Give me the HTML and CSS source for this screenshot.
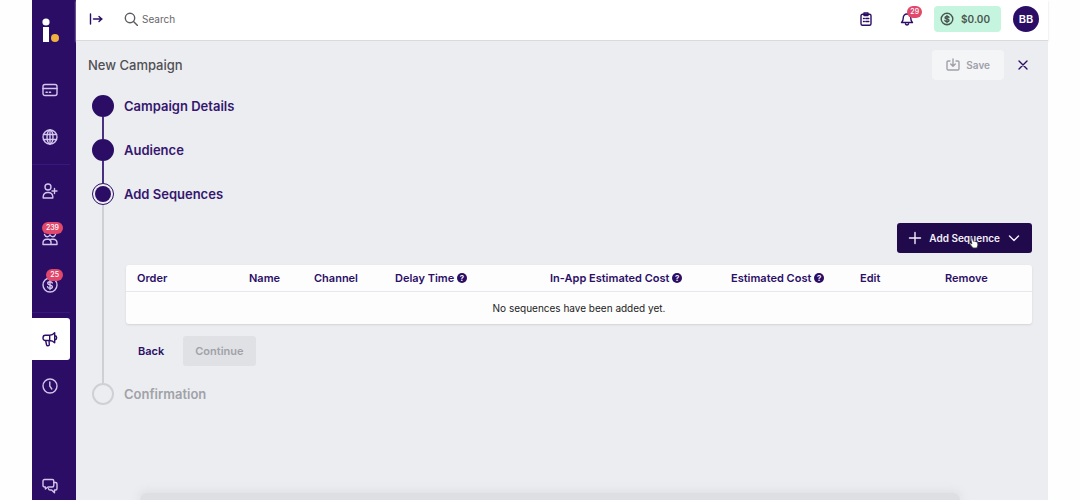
FILE: index.html
```html
<!DOCTYPE html>
<html lang="en">
<head>
    <meta charset="UTF-8">
    <meta name="viewport" content="width=device-width, initial-scale=1.0">
    <title>New Campaign</title>
    <link rel="stylesheet" href="styles.css">
</head>
<body>
    <div class="app">
        <nav class="sidebar" aria-label="Main">
            <a href="#" class="logo" aria-label="Home">
                <svg width="18" height="26" viewBox="0 0 18 26">
                    <circle cx="5" cy="4" r="3.6" fill="#fff"/>
                    <rect x="2" y="9" width="6" height="15" fill="#fff"/>
                    <circle cx="14" cy="20" r="4" fill="#f0b23e"/>
                </svg>
            </a>
            <a href="#" class="nav-item" aria-label="Billing">
                <svg class="icon" viewBox="0 0 16 16"><rect x="1" y="2.5" width="14" height="11" rx="2"/><path d="M1 6.5h14M4 10.3h1.3M7.3 10.3h1.3"/></svg>
            </a>
            <a href="#" class="nav-item" aria-label="Web">
                <svg class="icon" viewBox="0 0 16 16"><circle cx="8" cy="8" r="7"/><ellipse cx="8" cy="8" rx="3" ry="7"/><path d="M1.5 5.5h13M1.5 10.5h13M8 1v14"/></svg>
            </a>
            <hr class="divider">
            <a href="#" class="nav-item" aria-label="Add contact">
                <svg class="icon" viewBox="0 0 16 16"><circle cx="6" cy="4" r="3"/><path d="M1.2 15v-1.5A4.5 4.5 0 0 1 5.7 9.500h.6a4.500 4.500 0 0 1 4.500 4V15zM12.500 5.500v5M10 8h5"/></svg>
            </a>
            <a href="#" class="nav-item" aria-label="Contacts">
                <svg class="icon" viewBox="0 0 16 16"><path d="M2.500 4.500C3 6 4 6.700 5.200 6.700S7.400 6 8 4.800C8.600 6 9.600 6.700 10.800 6.700S13 6 13.500 4.500"/><path d="M1 14.500V13c0-2.200 1.700-3.800 4-3.800h1.500c1.500 0 2.500 1.300 2.500 3v2.300zM9 14.500h6V13c0-2.200-1.700-3.800-4-3.800H9.500L7.500 10"/></svg>
                <span class="badge">239</span>
            </a>
            <a href="#" class="nav-item" aria-label="Payments">
                <svg class="icon" viewBox="0 0 16 16"><circle cx="8" cy="8" r="7"/><path d="M10.300 6C10 5.100 9.100 4.800 8 4.800c-1.300 0-2.300.5-2.300 1.500 0 2.400 4.700 1 4.700 3.400 0 1-1 1.600-2.400 1.600-1.200 0-2.200-.5-2.400-1.500M8 3.500v9"/></svg>
                <span class="badge">25</span>
            </a>
            <hr class="divider">
            <a href="#" class="nav-item active" aria-label="Campaigns" aria-current="page">
                <svg class="icon" viewBox="0 0 16 16"><path d="M3.300 4.200h4.400c2 0 3.700-1 5-2.400v10c-1.300-1.400-3-2.300-5-2.300H3.300C2 9.500 1 8.300 1 6.900s1-2.700 2.300-2.700zM7.700 4.200v5.300M3.600 9.500l1 4.500c.2 1 2.800 1 2.700-.2l-.3-4.300M12.700 4.500c1.300.3 2 1.200 2 2.300s-.7 2-2 2.300"/></svg>
            </a>
            <a href="#" class="nav-item" aria-label="History">
                <svg class="icon" viewBox="0 0 16 16"><circle cx="8" cy="8" r="7"/><path d="M7.800 4v4.200l2 2.800"/></svg>
            </a>
            <a href="#" class="nav-item chat" aria-label="Chat">
                <svg class="icon" viewBox="0 0 16 16"><path d="M2.500 1.500h7.800c.9 0 1.500.6 1.500 1.500v4.500c0 .9-.6 1.500-1.500 1.500H6l-2.600 2V9h-.9C1.600 9 1 8.400 1 7.500V3c0-.9.600-1.500 1.500-1.500z"/><path d="M11.800 4.500h1.700c.9 0 1.500.6 1.500 1.500v4.500c0 .9-.6 1.500-1.500 1.500h-1v2.800L9.600 12H8c-.8 0-1.300-.4-1.500-1.200"/></svg>
            </a>
        </nav>

        <div class="main">
            <header class="topbar">
                <button class="icon-btn" aria-label="Expand menu">
                    <svg class="icon small" viewBox="0 0 14 14"><path d="M1.500 2v10M4.500 7H13M10 4.500L12.800 7 10 9.500"/></svg>
                </button>
                <label class="search">
                    <svg class="icon small" viewBox="0 0 14 14"><circle cx="6" cy="6" r="4.700"/><path d="M9.500 9.500l4 4"/></svg>
                    <input type="search" placeholder="Search" aria-label="Search">
                </label>
                <button class="icon-btn tasks" aria-label="Tasks">
                    <svg class="icon small" viewBox="0 0 14 14"><rect x="2" y="2.300" width="10" height="11" rx="1.500"/><path d="M5 1h4v2.500H5zM4.500 6.500h.8M6.800 6.500h3M4.500 9.500h.8M6.800 9.500h3"/></svg>
                </button>
                <button class="icon-btn bell" aria-label="Notifications">
                    <svg class="icon small" viewBox="0 0 14 14"><path d="M1.500 10.500c1.300-1 1.700-2 1.700-4.200C3.200 3.800 4.700 2 7 2s3.800 1.800 3.800 4.300c0 2.200.4 3.200 1.700 4.200zM5.500 12c.4 1.300 2.600 1.300 3 0"/></svg>
                    <span class="badge">29</span>
                </button>
                <button class="balance">
                    <svg class="icon small" viewBox="0 0 14 14"><circle cx="7" cy="7" r="5.800"/><path d="M9 5.400C8.700 4.700 8 4.500 7 4.500c-1.100 0-2 .4-2 1.200C5 7.600 9 6.500 9 8.400c0 .8-.9 1.200-2 1.200s-1.900-.4-2.100-1.100M7 3.400v7.300"/></svg>
                    $0.00
                </button>
                <button class="avatar">BB</button>
            </header>

            <main class="content">
                <div class="title-row">
                    <h1>New Campaign</h1>
                    <button class="save" disabled>
                        <svg class="icon small" viewBox="0 0 14 14"><path d="M4 3H2.300C1.500 3 1 3.500 1 4.300v6.400c0 .8.500 1.300 1.300 1.300h9.400c.8 0 1.300-.5 1.300-1.300V4.300c0-.8-.5-1.300-1.300-1.300H10M7 1v7M4.700 6L7 8.300 9.300 6"/></svg>
                        Save
                    </button>
                    <button class="icon-btn close" aria-label="Close">
                        <svg class="icon small" viewBox="0 0 14 14"><path d="M3 3l8 8M11 3l-8 8"/></svg>
                    </button>
                </div>

                <ol class="steps">
                    <li class="step done">
                        <div class="rail"><span class="dot"></span></div>
                        <h2>Campaign Details</h2>
                    </li>
                    <li class="step done">
                        <div class="rail"><span class="dot"></span></div>
                        <h2>Audience</h2>
                    </li>
                    <li class="step current">
                        <div class="rail"><span class="dot"></span></div>
                        <div class="step-body">
                            <h2>Add Sequences</h2>
                            <div class="actions">
                                <button class="add">
                                    <svg class="icon small" viewBox="0 0 14 14"><path d="M7 1.500v11M1.500 7h11"/></svg>
                                    Add Sequence
                                    <svg class="icon small" viewBox="0 0 14 14"><path d="M2.500 5L7 9.500 11.500 5"/></svg>
                                    <svg class="pointer" viewBox="0 0 12 14"><path d="M3 1c.7-.3 1.300 0 1.500.7L5.300 5c.8-.5 1.500-.3 1.800.3.700-.4 1.400-.1 1.600.5.800-.3 1.600.1 1.700.9l.3 2.800-1.200 3.500H4.800L1 8.300c-.5-.8.5-1.500 1.200-1l1.200.9L2.200 2.200C2.100 1.600 2.400 1.200 3 1z"/></svg>
                                </button>
                            </div>
                            <table class="sequences">
                                <colgroup>
                                    <col class="c-order"><col class="c-name"><col class="c-channel"><col class="c-delay">
                                    <col class="c-inapp"><col class="c-cost"><col class="c-edit"><col>
                                </colgroup>
                                <thead>
                                    <tr>
                                        <th>Order</th>
                                        <th>Name</th>
                                        <th>Channel</th>
                                        <th>Delay Time <span class="help">?</span></th>
                                        <th>In-App Estimated Cost <span class="help">?</span></th>
                                        <th>Estimated Cost <span class="help">?</span></th>
                                        <th>Edit</th>
                                        <th>Remove</th>
                                    </tr>
                                </thead>
                                <tbody>
                                    <tr><td colspan="8">No sequences have been added yet.</td></tr>
                                </tbody>
                            </table>
                            <div class="step-buttons">
                                <button class="back">Back</button>
                                <button class="continue" disabled>Continue</button>
                            </div>
                        </div>
                    </li>
                    <li class="step">
                        <div class="rail"><span class="dot"></span></div>
                        <h2>Confirmation</h2>
                    </li>
                </ol>
                <div class="bottom-shade"></div>
            </main>
        </div>
    </div>
</body>
</html>
```
FILE: styles.css
```css
* {
    box-sizing: border-box;
}
body {
    margin: 0;
    background: #fefefe;
    color: #2b0f66;
    font-family: Inter, "Liberation Sans", sans-serif;
    font-size: 10px;
}
button {
    font: inherit;
    color: inherit;
    border: none;
    background: none;
    padding: 0;
    cursor: pointer;
}
h1, h2 {
    margin: 0;
    font-size: 13px;
    line-height: 22px;
}
.app {
    display: flex;
    min-height: 100vh;
    margin: 0 32px;
}
.icon {
    width: 16px;
    height: 16px;
    fill: none;
    stroke: currentColor;
    stroke-width: 1.4;
    stroke-linecap: round;
    stroke-linejoin: round;
}
.icon.small {
    width: 14px;
    height: 14px;
}

/* sidebar */
.sidebar {
    display: flex;
    flex-direction: column;
    gap: 5px;
    width: 44px;
    background: #2b0d66;
}
.logo {
    height: 64px;
    padding: 18px 0 0 9px;
}
.nav-item {
    position: relative;
    display: flex;
    align-items: center;
    justify-content: center;
    width: 38px;
    height: 42px;
    padding-right: 2px;
    color: #d3c5ec;
}
.nav-item.active {
    background: #fff;
    color: #2b0d66;
    border-radius: 0 3px 3px 0;
}
.nav-item.chat {
    height: 28px;
    margin-top: auto;
}
.divider {
    width: 38px;
    margin: 1px 0 0;
    border: none;
    border-top: 1px solid #371880;
}
.badge {
    position: absolute;
    top: 5px;
    right: 7px;
    padding: 0 4px;
    border-radius: 6px;
    background: #e2486b;
    color: #fff;
    font-size: 7px;
    font-weight: 500;
    line-height: 12px;
}

/* top bar */
.main {
    display: flex;
    flex-direction: column;
    flex: 1;
    min-width: 0;
}
.topbar {
    display: flex;
    align-items: center;
    height: 41px;
    padding: 0 9px 2px 13px;
    background: #fff;
    border-bottom: 1px solid #d9dade;
    box-shadow: 0 1px 2px #dcdde1;
}
.icon-btn {
    position: relative;
    display: flex;
}
.search {
    display: flex;
    flex: 1;
    align-items: center;
    gap: 4px;
    margin-left: 21px;
    color: #5c5c60;
}
.search input {
    flex: 1;
    border: none;
    outline: none;
    padding: 0;
    background: none;
    color: inherit;
    font: inherit;
}
.search input::placeholder {
    color: #66666a;
}
.bell {
    margin: 0 20px 0 27px;
}
.bell .badge {
    top: -6px;
    right: -8px;
    padding: 0 3px;
}
.balance {
    display: flex;
    align-items: center;
    gap: 7px;
    height: 26px;
    padding: 0 11px 0 6px;
    border-radius: 4px;
    background: #c5f5de;
    color: #4c5552;
    font-weight: 600;
}
.avatar {
    width: 26px;
    height: 26px;
    margin-left: 12px;
    border-radius: 50%;
    background: #2b0d66;
    color: #fff;
    font-size: 11px;
    font-weight: 600;
}

/* page */
.content {
    display: flex;
    flex-direction: column;
    flex: 1;
    padding: 9px 16px 0 12px;
    background: #ecedf0;
}
.title-row {
    display: flex;
    align-items: center;
    height: 30px;
}
.title-row h1 {
    flex: 1;
    color: #505054;
    font-weight: 500;
}
.save {
    display: flex;
    align-items: center;
    gap: 6px;
    height: 30px;
    padding: 0 14px;
    border-radius: 4px;
    background: #f4f5f7;
    color: #a0a0a8;
    font-weight: 600;
}
.close {
    margin: 0 2px 0 12px;
}
.steps {
    list-style: none;
    margin: 15px 0 0;
    padding: 0 0 0 4px;
}
.step {
    display: flex;
    gap: 10px;
    min-height: 44px;
}
.rail {
    display: flex;
    flex-direction: column;
    align-items: center;
}
.rail::after {
    content: "";
    flex: 1;
    width: 2px;
    background: #cfd0d5;
}
.step:last-child .rail::after {
    display: none;
}
.step.done .rail::after {
    background: #4a3180;
}
.dot {
    width: 22px;
    height: 22px;
    border: 2px solid #cfd0d5;
    border-radius: 50%;
}
.done .dot {
    border-color: #2b0d66;
    background: #2b0d66;
}
.current .dot {
    padding: 2px;
    border: 1px solid #2b0d66;
    background: #2b0d66 content-box;
}
.step h2 {
    color: #a0a2a8;
    font-weight: 600;
}
.step.done h2,
.step.current h2 {
    color: #35166f;
}
.step-body {
    flex: 1;
    min-width: 0;
}
.actions {
    display: flex;
    justify-content: flex-end;
    margin: 18px 0 12px;
}
.add {
    position: relative;
    display: flex;
    align-items: center;
    gap: 7px;
    height: 30px;
    padding: 0 11px;
    border-radius: 3px;
    background: #210a4c;
    color: #f3effa;
    font-weight: 600;
}
.pointer {
    position: absolute;
    top: 14px;
    right: 53px;
    width: 10px;
    height: 12px;
    fill: #fff;
    stroke: #333;
    stroke-width: 1;
}
.sequences {
    width: calc(100% - 2px);
    margin-left: 2px;
    table-layout: fixed;
    border-spacing: 0;
    border-radius: 3px;
    background: #fdfdfe;
    box-shadow: 0 1px 2px #d3d4d8;
}
.sequences th {
    height: 27px;
    padding: 0 0 0 11px;
    border-bottom: 1px solid #e6e7ea;
    font-size: 11px;
    font-weight: 600;
    text-align: left;
    white-space: nowrap;
}
.sequences td {
    height: 32px;
    padding: 0;
    color: #222;
    text-align: center;
}
.c-order { width: 112px; }
.c-name { width: 65px; }
.c-channel { width: 81px; }
.c-delay { width: 155px; }
.c-inapp { width: 181px; }
.c-cost { width: 129px; }
.c-edit { width: 85px; }
.help {
    display: inline-block;
    width: 10px;
    height: 10px;
    border-radius: 50%;
    background: #2b0d66;
    color: #fff;
    font-size: 8px;
    line-height: 10px;
    text-align: center;
    vertical-align: 1px;
}
.step-buttons {
    display: flex;
    gap: 6px;
    margin: 12px 0 17px 1px;
}
.step-buttons button {
    height: 30px;
    padding: 0 13px;
    border-radius: 3px;
    font-size: 11px;
    font-weight: 600;
}
.step-buttons .continue {
    padding: 0 12px;
    background: #e0e1e5;
    color: #a0a2a8;
}
.bottom-shade {
    height: 7px;
    margin: auto 72px 0 52px;
    border-radius: 8px 8px 0 0;
    background: #dedfe3;
    box-shadow: 0 0 10px 2px #dedfe3;
    clip-path: inset(-12px -12px 0);
}
```
